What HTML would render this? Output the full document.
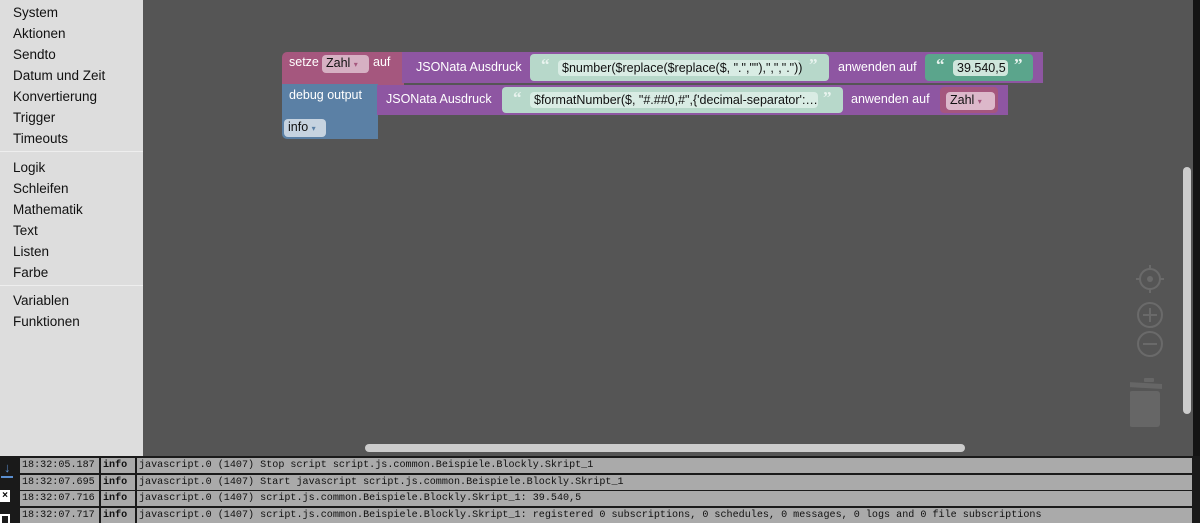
<!DOCTYPE html>
<html><head><style>
*{margin:0;padding:0;box-sizing:border-box}
body{width:1200px;height:523px;overflow:hidden;background:#555;font-family:"Liberation Sans",sans-serif;position:relative}
.a{position:absolute}
.side{left:0;top:0;width:143px;height:456px;background:#ddd}
.side div{position:absolute;left:13px;font-size:13.5px;color:#111}
.sep{position:absolute;left:0;width:143px;height:1px;background:#eee}
.t{position:absolute;color:#fff;font-size:12.5px;white-space:nowrap}
.f{position:absolute;font-size:12.5px;color:#111;white-space:nowrap;border-radius:4px;padding-left:4px;line-height:16px}
.q{position:absolute;color:#e8f3ee;font-size:17px;font-weight:bold;font-family:"Liberation Serif",serif}
.log{left:0;top:456px;width:1200px;height:67px;background:#1a1a1a}
.row{position:absolute;height:15px;font-family:"Liberation Mono",monospace;font-size:10.1px;line-height:15px;color:#111}
.c{position:absolute;top:0;height:15px;background:#aaa;padding-left:2px;white-space:nowrap;overflow:hidden}
</style></head><body>
<div class="a side">
<div style="top:5px">System</div><div style="top:26px">Aktionen</div><div style="top:47px">Sendto</div><div style="top:68px">Datum und Zeit</div><div style="top:89px">Konvertierung</div><div style="top:110px">Trigger</div><div style="top:131px">Timeouts</div>
<span class="sep" style="top:151px"></span>
<div style="top:160px">Logik</div><div style="top:181px">Schleifen</div><div style="top:202px">Mathematik</div><div style="top:223px">Text</div><div style="top:244px">Listen</div><div style="top:265px">Farbe</div>
<span class="sep" style="top:285px"></span>
<div style="top:293px">Variablen</div><div style="top:314px">Funktionen</div>
</div>

<div class="a" style="left:282px;top:52px;width:122px;height:33px;background:#a5577e;border-radius:5px 0 0 0"></div>
<div class="t" style="left:289px;top:55px">setze</div>
<div class="f" style="left:322px;top:55px;width:47px;background:#d6b0c3">Zahl <span style="font-size:8px;color:#a5577e">▾</span></div>
<div class="t" style="left:373px;top:55px">auf</div>
<div class="a" style="left:402px;top:52px;width:641px;height:31px;background:#8e56a2"></div>
<div class="t" style="left:416px;top:60px">JSONata Ausdruck</div>
<div class="a" style="left:530px;top:54px;width:299px;height:27px;background:#b7d8ca;border-radius:4px"></div>
<div class="q" style="left:541px;top:55px">“</div>
<div class="f" style="left:558px;top:60px;width:242px;background:#d9ece4">$number($replace($replace($, ".",""),",","."))</div>
<div class="q" style="left:809px;top:55px">”</div>
<div class="t" style="left:838px;top:60px">anwenden auf</div>
<div class="a" style="left:925px;top:54px;width:108px;height:27px;background:#5ba58c;border-radius:4px"></div>
<div class="q" style="left:936px;top:55px">“</div>
<div class="f" style="left:953px;top:60px;width:55px;background:#cfe6dc">39.540,5</div>
<div class="q" style="left:1014px;top:55px">”</div>

<div class="a" style="left:282px;top:84px;width:96px;height:55px;background:#5b80a5;border-radius:0 0 0 5px"></div>
<div class="t" style="left:289px;top:88px">debug output</div>
<div class="f" style="left:284px;top:119px;width:42px;background:#c6d3e0">info <span style="font-size:8px;color:#5b80a5">▾</span></div>
<div class="a" style="left:377px;top:85px;width:631px;height:30px;background:#8e56a2"></div>
<div class="t" style="left:386px;top:92px">JSONata Ausdruck</div>
<div class="a" style="left:502px;top:87px;width:341px;height:26px;background:#b7d8ca;border-radius:4px"></div>
<div class="q" style="left:513px;top:88px">“</div>
<div class="f" style="left:530px;top:92px;width:288px;background:#d9ece4">$formatNumber($, "#.##0,#",{'decimal-separator':…</div>
<div class="q" style="left:823px;top:88px">”</div>
<div class="t" style="left:851px;top:92px">anwenden auf</div>
<div class="a" style="left:940px;top:87px;width:58px;height:26px;background:#a5577e;border-radius:4px"></div>
<div class="f" style="left:946px;top:92px;width:49px;background:#dcb8ca">Zahl <span style="font-size:8px;color:#a5577e">▾</span></div>

<svg class="a" style="left:1130px;top:260px" width="40" height="170">
<g stroke="#6a6a6a" stroke-width="2" fill="none">
<circle cx="20" cy="19" r="10"/><line x1="20" y1="5" x2="20" y2="9"/><line x1="20" y1="29" x2="20" y2="33"/><line x1="6" y1="19" x2="10" y2="19"/><line x1="30" y1="19" x2="34" y2="19"/>
<circle cx="20" cy="55" r="12"/><line x1="13" y1="55" x2="27" y2="55"/><line x1="20" y1="48" x2="20" y2="62"/>
<circle cx="20" cy="84" r="12"/><line x1="13" y1="84" x2="27" y2="84"/></g>
<circle cx="20" cy="19" r="3" fill="#6a6a6a"/>
<path d="M-3 122 L32 124 L32 129 L-3 127Z" fill="#666"/>
<rect x="14" y="118" width="10" height="4" rx="1" fill="#666"/>
<rect x="-1" y="131" width="31" height="36" rx="3" fill="#666"/>
</svg>
<div class="a" style="left:365px;top:444px;width:600px;height:8px;background:#ccc;border-radius:4px"></div>
<div class="a" style="left:1183px;top:167px;width:8px;height:247px;background:#ccc;border-radius:4px"></div>
<div class="a" style="left:1193px;top:0;width:7px;height:523px;background:#141414"></div>

<div class="a log">
<div class="a" style="left:4px;top:4px;color:#5b8fd0;font-size:13px">↓</div>
<div class="a" style="left:1px;top:20px;width:12px;height:2px;background:#5b8fd0"></div>
<div class="a" style="left:0;top:34px;width:10px;height:12px;background:#fff;color:#000;font-size:10px;font-weight:bold;text-align:center;line-height:12px">×</div>
<div class="a" style="left:0;top:58px;width:10px;height:9px;border:2px solid #fff;border-bottom:none"></div>
<div class="row" style="top:2px;left:20px;width:1172px"><div class="c" style="left:0;width:79px">18:32:05.187</div><div class="c" style="left:81px;width:34px;font-weight:bold">info</div><div class="c" style="left:117px;width:1055px">javascript.0 (1407) Stop script script.js.common.Beispiele.Blockly.Skript_1</div></div>
<div class="row" style="top:19px;left:20px;width:1172px"><div class="c" style="left:0;width:79px">18:32:07.695</div><div class="c" style="left:81px;width:34px;font-weight:bold">info</div><div class="c" style="left:117px;width:1055px">javascript.0 (1407) Start javascript script.js.common.Beispiele.Blockly.Skript_1</div></div>
<div class="row" style="top:35px;left:20px;width:1172px"><div class="c" style="left:0;width:79px">18:32:07.716</div><div class="c" style="left:81px;width:34px;font-weight:bold">info</div><div class="c" style="left:117px;width:1055px">javascript.0 (1407) script.js.common.Beispiele.Blockly.Skript_1: 39.540,5</div></div>
<div class="row" style="top:52px;left:20px;width:1172px"><div class="c" style="left:0;width:79px">18:32:07.717</div><div class="c" style="left:81px;width:34px;font-weight:bold">info</div><div class="c" style="left:117px;width:1055px">javascript.0 (1407) script.js.common.Beispiele.Blockly.Skript_1: registered 0 subscriptions, 0 schedules, 0 messages, 0 logs and 0 file subscriptions</div></div>
</div>
</body></html>
